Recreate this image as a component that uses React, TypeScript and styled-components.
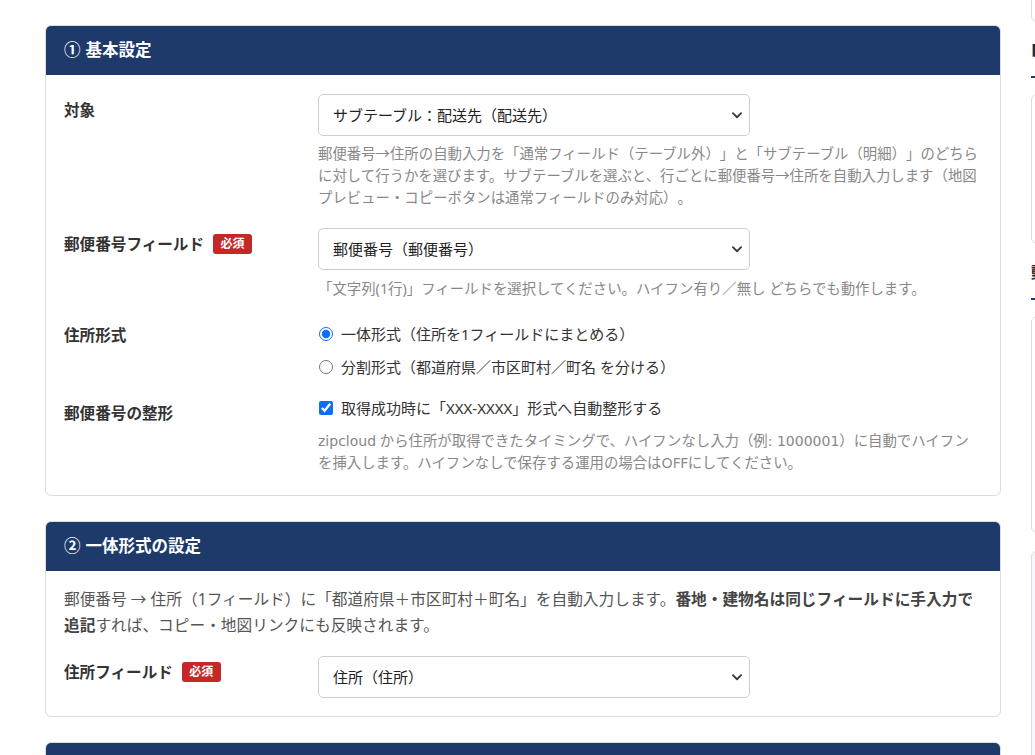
import styled, { createGlobalStyle } from 'styled-components';

const GlobalStyle = createGlobalStyle`
  html, body {
    margin: 0;
    padding: 0;
    overflow: hidden;
    background: #fff;
  }
  body {
    font-family: "Noto Sans", "Noto Sans CJK JP", sans-serif;
    color: #333;
    text-spacing-trim: space-all;
  }
`;

const Page = styled.div`
  display: grid;
  grid-template-columns: 956px 300px;
  column-gap: 30px;
  align-items: start;
  width: max-content;
  padding: 25px 0 0 45px;
`;

const Main = styled.main`
  display: flex;
  flex-direction: column;
  gap: 25px;
`;

const Card = styled.section`
  border: 1px solid #dcdcdc;
  border-radius: 6px;
  background: #fff;
  overflow: hidden;
`;

const CardHeader = styled.h2`
  margin: 0;
  height: 49px;
  display: flex;
  align-items: center;
  gap: 5px;
  padding: 0 18px;
  background: #1d3a6b;
  color: #fff;
  font-size: 16.5px;
  font-weight: 700;
  line-height: 1;
`;

const CardBody = styled.div<{ $top?: number; $bottom?: number }>`
  display: flex;
  flex-direction: column;
  gap: 19px;
  padding: ${(p) => p.$top ?? 19}px 18px ${(p) => p.$bottom ?? 21}px;
`;

const Row = styled.div`
  display: grid;
  grid-template-columns: 254px 1fr;
`;

const Label = styled.div`
  display: flex;
  align-items: center;
  gap: 9px;
  padding-top: 5px;
  font-size: 15.6px;
  font-weight: 700;
  line-height: 22px;
  color: #333;
  align-self: start;
`;

const Badge = styled.span`
  display: inline-flex;
  align-items: center;
  height: 20px;
  padding: 0 7.5px;
  border-radius: 3px;
  background: #c62828;
  color: #fff;
  font-size: 12px;
  font-weight: 700;
  line-height: 1;
`;

const Control = styled.div`
  display: flex;
  flex-direction: column;
  min-width: 0;
`;

const SelectWrap = styled.div`
  position: relative;
  width: 432px;
`;

const Select = styled.select`
  appearance: none;
  width: 100%;
  height: 42px;
  padding: 0 36px 0 14px;
  border: 1px solid #cfcfcf;
  border-radius: 5px;
  background: #fff;
  font-family: inherit;
  font-size: 15px;
  color: #222;
`;

const Chevron = styled.svg`
  position: absolute;
  right: 7px;
  top: 50%;
  transform: translateY(-50%);
  pointer-events: none;
`;

const Help = styled.p<{ $gap?: number }>`
  margin: ${(p) => p.$gap ?? 7}px 0 0;
  font-size: 14.4px;
  line-height: 22px;
  color: #888;
`;

const Latin = styled.span`
  font-family: "DejaVu Sans", "Noto Sans", sans-serif;
  font-size: 14px;
`;

const OptionGroup = styled.div`
  display: flex;
  flex-direction: column;
  gap: 11px;
  padding-top: 4px;
`;

const Option = styled.label`
  display: flex;
  align-items: center;
  gap: 8px;
  font-size: 15px;
  line-height: 22px;
  color: #333;

  input {
    width: 14px;
    height: 14px;
    margin: 0 0 0 1px;
    accent-color: #0d6efd;
  }
`;

const Description = styled.p`
  margin: 0 0 -1px;
  font-size: 15.7px;
  line-height: 26px;
  color: #555;

  strong {
    color: #444;
    font-weight: 700;
  }
`;

const Sidebar = styled.aside`
  display: flex;
  flex-direction: column;
  margin-top: -123px;
`;

const SideCard = styled.div<{ $h: number; $tint?: boolean }>`
  height: ${(p) => p.$h}px;
  box-sizing: border-box;
  padding: 16px;
  border: 1px solid #dcdcdc;
  border-radius: 6px;
  background: ${(p) => (p.$tint ? '#f7f8fc' : '#fff')};
  font-size: 13px;
  line-height: 20px;
  color: #555;
`;

const SideHeading = styled.h3`
  margin: 16px 0 16px;
  padding-bottom: 14px;
  border-bottom: 2px solid #1d3a6b;
  font-size: 16px;
  font-weight: 700;
  line-height: 24px;
  color: #1d2b4a;
`;

const Spacer = styled.div`
  height: 18px;
`;

const ChevronIcon = () => (
  <Chevron width="12" height="12" viewBox="0 0 16 16" fill="none">
    <path d="M2.5 5.5L8 11l5.5-5.5" stroke="#343a40" strokeWidth="2.4" strokeLinecap="round" strokeLinejoin="round" />
  </Chevron>
);

const Dropdown = ({ value }: { value: string }) => (
  <SelectWrap>
    <Select defaultValue={value}>
      <option>{value}</option>
    </Select>
    <ChevronIcon />
  </SelectWrap>
);

export default function App() {
  return (
    <>
      <GlobalStyle />
      <Page>
        <Main>
          <Card>
            <CardHeader>
              <span>①</span>
              <span>基本設定</span>
            </CardHeader>
            <CardBody>
              <Row>
                <Label>対象</Label>
                <Control>
                  <Dropdown value="サブテーブル：配送先（配送先）" />
                  <Help>
                    郵便番号→住所の自動入力を「通常フィールド（テーブル外）」と「サブテーブル（明細）」のどちらに対して行うかを選びます。サブテーブルを選ぶと、行ごとに郵便番号→住所を自動入力します（地図プレビュー・コピーボタンは通常フィールドのみ対応）。
                  </Help>
                </Control>
              </Row>
              <Row>
                <Label>
                  郵便番号フィールド<Badge>必須</Badge>
                </Label>
                <Control>
                  <Dropdown value="郵便番号（郵便番号）" />
                  <Help $gap={8}>「文字列(1行)」フィールドを選択してください。ハイフン有り／無し どちらでも動作します。</Help>
                </Control>
              </Row>
              <Row>
                <Label>住所形式</Label>
                <OptionGroup>
                  <Option>
                    <input type="radio" name="format" defaultChecked />
                    一体形式（住所を1フィールドにまとめる）
                  </Option>
                  <Option>
                    <input type="radio" name="format" />
                    分割形式（都道府県／市区町村／町名 を分ける）
                  </Option>
                </OptionGroup>
              </Row>
              <Row>
                <Label>郵便番号の整形</Label>
                <Control>
                  <Option>
                    <input type="checkbox" defaultChecked />
                    取得成功時に「XXX-XXXX」形式へ自動整形する
                  </Option>
                  <Help $gap={11}>
                    <Latin>zipcloud</Latin> から住所が取得できたタイミングで、ハイフンなし入力（例<Latin>: 1000001</Latin>）に自動でハイフンを挿入します。ハイフンなしで保存する運用の場合はOFFにしてください。
                  </Help>
                </Control>
              </Row>
            </CardBody>
          </Card>

          <Card>
            <CardHeader>
              <span>②</span>
              <span>一体形式の設定</span>
            </CardHeader>
            <CardBody $top={15} $bottom={18}>
              <Description>
                郵便番号 → 住所（1フィールド）に「都道府県＋市区町村＋町名」を自動入力します。
                <strong>番地・建物名は同じフィールドに手入力で追記</strong>
                すれば、コピー・地図リンクにも反映されます。
              </Description>
              <Row>
                <Label>
                  住所フィールド<Badge>必須</Badge>
                </Label>
                <Control>
                  <Dropdown value="住所（住所）" />
                </Control>
              </Row>
            </CardBody>
          </Card>

          <Card>
            <CardHeader>
              <span>③</span>
              <span>分割形式の設定</span>
            </CardHeader>
            <CardBody>
              <Description>都道府県・市区町村・町名をそれぞれ別のフィールドに自動入力します。</Description>
            </CardBody>
          </Card>
        </Main>

        <Sidebar>
          <SideCard $h={120}>保存後、アプリの設定を更新すると反映されます。</SideCard>
          <SideHeading>■ 使い方</SideHeading>
          <SideCard $h={150}>郵便番号を入力すると、住所フィールドに自動で入力されます。</SideCard>
          <SideHeading>動作確認</SideHeading>
          <SideCard $h={217}>レコード追加画面で郵便番号を入力し、住所が入ることを確認してください。</SideCard>
          <Spacer />
          <SideCard $h={300} $tint>
            zipcloud の郵便番号検索APIを利用しています。
          </SideCard>
        </Sidebar>
      </Page>
    </>
  );
}
